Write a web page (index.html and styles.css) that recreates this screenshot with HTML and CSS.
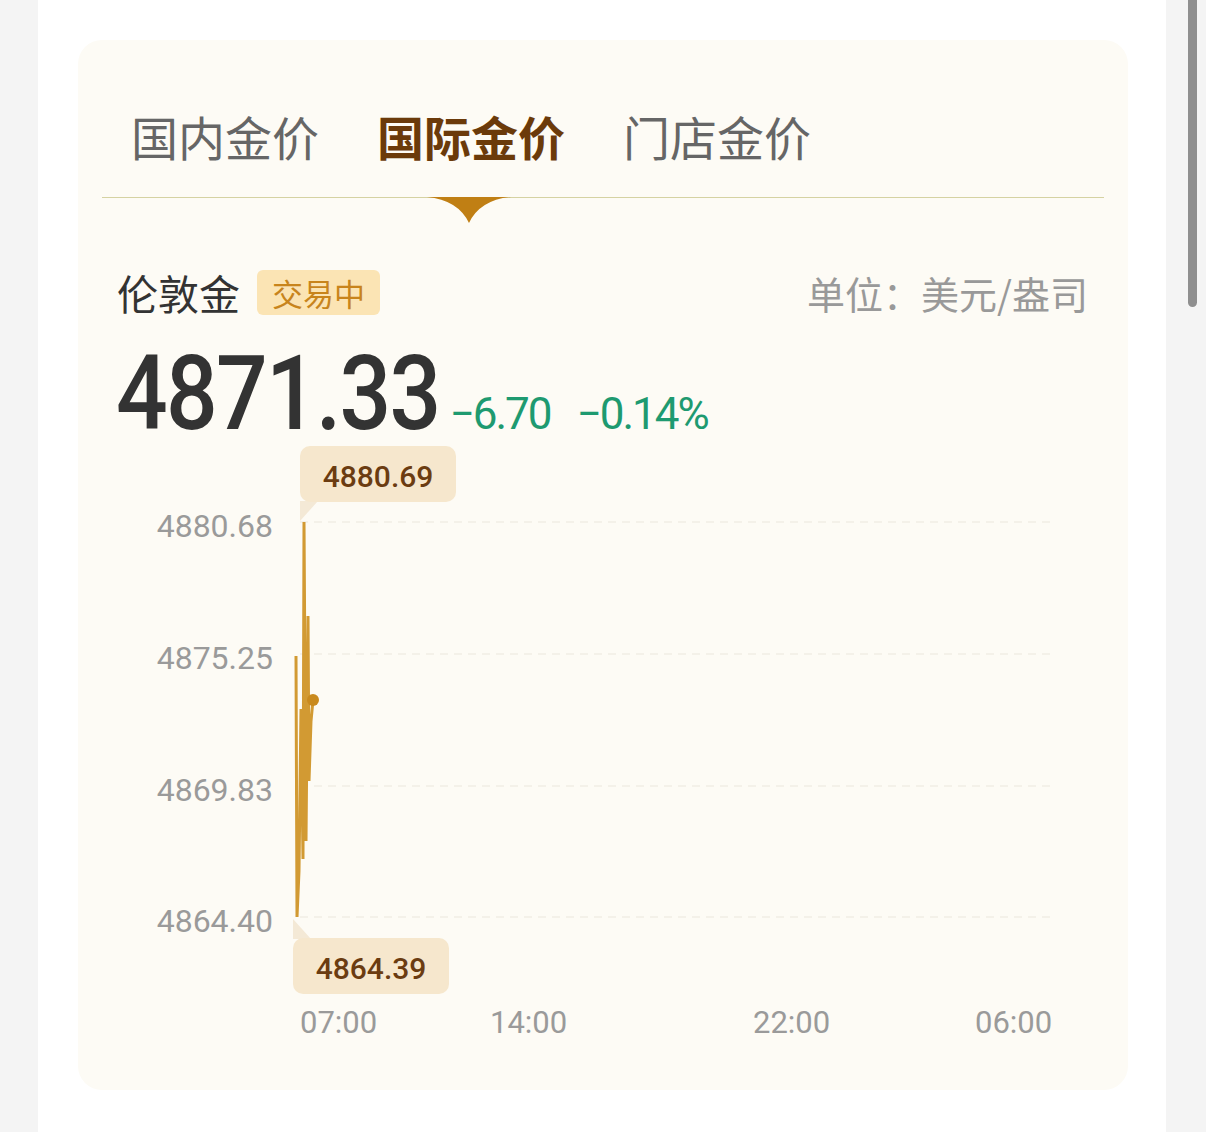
FILE: index.html
```html
<!DOCTYPE html>
<html lang="zh-CN">
<head>
<meta charset="utf-8">
<title>国际金价</title>
<link rel="stylesheet" href="styles.css">
</head>
<body>
<div class="page">
  <div class="column">
    <section class="card">
      <nav class="tabs">
        <span class="tab">国内金价</span>
        <span class="tab active">国际金价</span>
        <span class="tab">门店金价</span>
      </nav>
      <div class="head">
        <span class="name">伦敦金</span>
        <span class="badge">交易中</span>
        <span class="unit">单位：美元/盎司</span>
      </div>
      <div class="price">
        <span class="big">4871.33</span>
        <span class="chg">−6.70</span>
        <span class="chg pct">−0.14%</span>
      </div>
      <svg class="chart" width="1002" height="620" viewBox="0 0 1002 620">
        <g class="grid">
          <line x1="198" y1="77" x2="948" y2="77"/>
          <line x1="198" y1="209" x2="948" y2="209"/>
          <line x1="198" y1="341" x2="948" y2="341"/>
          <line x1="198" y1="472" x2="948" y2="472"/>
        </g>
        <g class="ylab">
          <text x="171" y="92">4880.68</text>
          <text x="171" y="224">4875.25</text>
          <text x="171" y="356">4869.83</text>
          <text x="171" y="487">4864.40</text>
        </g>
        <g class="xlab">
          <text x="198" y="588">07:00</text>
          <text x="388" y="588">14:00</text>
          <text x="651" y="588">22:00</text>
          <text x="873" y="588">06:00</text>
        </g>
        <polygon class="tipptr" points="198,56 216,56 198,76"/>
        <rect class="tipbox" x="198" y="1" width="156" height="56" rx="10"/>
        <text class="tiptext" x="276" y="42">4880.69</text>
        <polygon class="tipptr" points="191,474 191,494 209,494"/>
        <rect class="tipbox" x="191" y="493" width="156" height="56" rx="10"/>
        <text class="tiptext" x="269" y="534">4864.39</text>
        <polyline class="line" points="194,211 195,472 197,426 199,264 201,414 202,77 204,396 206,171 207,336 209,276 211,255"/>
        <circle class="dot" cx="211" cy="255" r="6"/>
      </svg>
    </section>
  </div>
  <div class="rail"><div class="thumb"></div></div>
</div>
</body>
</html>
```

FILE: styles.css
```css
html, body {
  margin: 0;
  padding: 0;
  background: #f4f4f4;
}
body {
  font-family: "Noto Sans CJK SC", "Noto Sans", sans-serif;
}
.page {
  display: flex;
  width: 1206px;
  height: 1132px;
  overflow: hidden;
}
.column {
  margin-left: 38px;
  width: 1128px;
  background: #ffffff;
  padding: 40px 38px 0 40px;
  box-sizing: border-box;
}
.rail {
  flex: 1;
  padding-left: 22px;
}
.thumb {
  width: 9px;
  height: 307px;
  background: #8f8f8f;
  border-radius: 0 0 5px 5px;
}
.card {
  height: 1050px;
  background: #fdfbf5;
  border-radius: 24px;
  padding: 0 24px;
  box-sizing: border-box;
}
.tabs {
  display: flex;
  gap: 58px;
  padding: 67px 0 0 29px;
  border-bottom: 1px solid #d5d2a2;
}
.tab {
  position: relative;
  font-size: 47px;
  line-height: 58px;
  padding-bottom: 32px;
  color: #666666;
}
.tab.active {
  color: #6b3a0a;
  font-weight: 700;
}
.tab.active::after {
  content: "";
  position: absolute;
  left: 50%;
  top: 100%;
  width: 84px;
  height: 26px;
  margin-left: -44px;
  background: #c07f14;
  clip-path: path("M0 0 H84 Q53 3 42 26 Q31 3 0 0 Z");
}
.head {
  display: flex;
  align-items: center;
  height: 46px;
  margin-top: 71px;
  padding: 0 16px 0 15px;
}
.name {
  font-size: 41px;
  color: #333333;
  line-height: 46px;
}
.badge {
  margin-left: 17px;
  height: 45px;
  line-height: 45px;
  padding: 0 15px;
  font-size: 31px;
  color: #c8841c;
  background: #fbe4b4;
  border-radius: 6px;
}
.unit {
  margin-left: auto;
  font-size: 38px;
  color: #999999;
}
.price {
  display: flex;
  align-items: baseline;
  margin-top: 28px;
  padding-left: 14px;
  font-family: Roboto, "Liberation Sans", sans-serif;
}
.big {
  display: inline-block;
  font-size: 104px;
  line-height: 102px;
  font-weight: 500;
  color: #333333;
  letter-spacing: -2px;
  transform: scaleX(0.875);
  transform-origin: left center;
  margin-right: -46px;
}
.chg {
  font-size: 44px;
  color: #1e9a70;
  margin-left: 10px;
  letter-spacing: -2px;
}
.chg.pct {
  margin-left: 26px;
}
.chart {
  display: block;
  font-family: Roboto, "Liberation Sans", sans-serif;
}
.grid line {
  stroke: #ece8de;
  stroke-width: 1.2;
  stroke-dasharray: 8 6;
}
.ylab text {
  font-size: 32px;
  fill: #9a9a9a;
  text-anchor: end;
}
.xlab text {
  font-size: 31px;
  fill: #9a9a9a;
}
.tipbox {
  fill: #f6e7cd;
}
.tipptr {
  fill: #f4e9d6;
}
.tiptext {
  font-size: 30px;
  font-weight: 500;
  fill: #6b3c11;
  text-anchor: middle;
}
.line {
  fill: none;
  stroke: #d29a33;
  stroke-width: 3;
  stroke-linejoin: miter;
}
.dot {
  fill: #c98a1e;
}
```
